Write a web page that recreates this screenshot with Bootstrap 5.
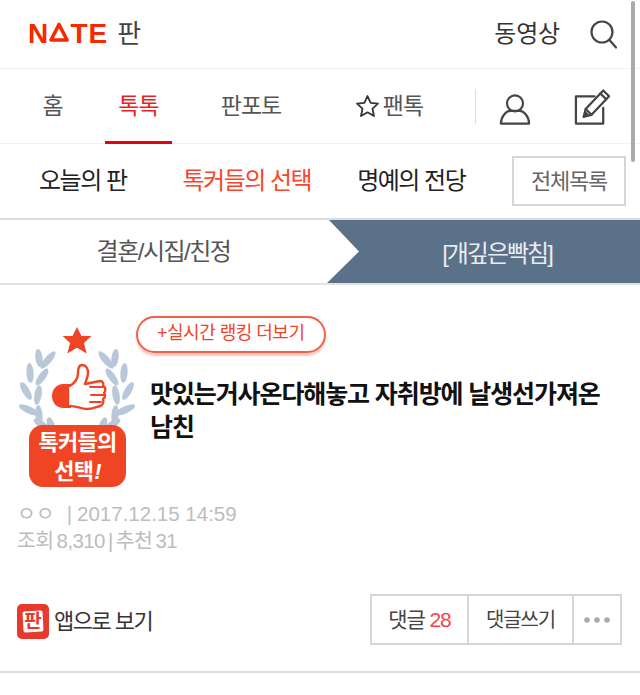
<!DOCTYPE html>
<html lang="ko">
<head>
  <meta charset="UTF-8">
  <meta name="viewport" content="width=device-width, initial-scale=1">
  <title>네이트 판</title>
  <link href="https://cdn.jsdelivr.net/npm/bootstrap@5.3.0/dist/css/bootstrap.min.css" rel="stylesheet">
  <style>
    body { font-family: "Liberation Sans", "Noto Sans CJK KR", sans-serif; color: #333; height: 695px; overflow: hidden; position: relative; background: #fff; }
    a { text-decoration: none; color: inherit; }
    .top-bar { height: 69px; border-bottom: 1px solid #f2f2f2; padding: 0 23px 0 28px; }
    .nate-logo { font-size: 28px; font-weight: 700; color: #f52a00; letter-spacing: 1px; line-height: 1; }
    .logo-a { position: relative; color: transparent; }
    .logo-a svg { position: absolute; left: 0; top: 4px; }
    .pann-word { font-size: 26px; margin-left: 9px; color: #444; line-height: 1; }
    .video-link { font-size: 24px; letter-spacing: -.2px; margin-right: 30px; }
    .main-tabs { height: 75px; border-bottom: 1px solid #f2f2f2; position: relative; }
    .main-tab { font-size: 23px; letter-spacing: -1px; color: #555; height: 74px; display: flex; align-items: center; justify-content: center; }
    .tab-home { width: 105px; }
    .tab-talk { width: 67px; color: #ee1c25; border-bottom: 3px solid #e60012; height: 75px; padding-top: 3px; }
    .tab-photo { width: 158px; }
    .tab-fan { width: 118px; gap: 3px; }
    .tab-split { width: 1px; height: 35px; background: #ddd; margin: 0 23px 0 27px; }
    .tab-user { margin-top: 6px; }
    .tab-pen { margin-left: 42px; margin-top: 2px; }
    .sub-tabs { height: 76px; border-bottom: 2px solid #ddd; font-size: 24px; letter-spacing: -1.5px; color: #222; padding-left: 39px; }
    .sub-pick { color: #f8452b; margin-left: 56px; margin-right: 46px; }
    .all-list { width: 114px; height: 50px; border: 2px solid #d6d6d6; margin-left: auto; margin-right: 14px; font-size: 22px; letter-spacing: -1.2px; color: #666; }
    .crumb-bar { height: 65px; border-bottom: 2px solid #e2e2e2; font-size: 24px; letter-spacing: -1.5px; }
    .crumb-left { width: 327px; color: #555; }
    .crumb-right { flex: 1; background: #5b7089; color: #e8ecf0; letter-spacing: -2px; clip-path: polygon(2px 0, 100% 0, 100% 100%, 0 100%, 32px 50%); }
    .crumb-right span { margin-left: 27px; padding-top: 4px; }
    .post-head { padding: 31px 0 0 18px; }
    .pick-badge { width: 118px; flex: none; position: relative; height: 163px; margin-top: 9px; }
    .pick-label { position: absolute; left: 11px; bottom: 1px; width: 97px; height: 62px; border-radius: 14px; background: #f04525; color: #fff; font-size: 22px; font-weight: 700; line-height: 29px; letter-spacing: -.8px; text-align: center; padding-top: 3px; }
    .pick-label i { margin-left: 1px; }
    .rank-pill { display: inline-block; height: 37px; line-height: 31px; padding: 0 19px; border: 2px solid #f0604a; border-radius: 19px; box-shadow: 0 3px 2px #f7c9c1; color: #f04525; font-size: 18px; letter-spacing: -.5px; }
    .post-title { margin: 25px 30px 0 14px; font-size: 25px; font-weight: 700; line-height: 33px; letter-spacing: -1.1px; color: #111; word-break: keep-all; }
    .post-meta { padding-left: 17px; margin-top: 12px; color: #bdbdbd; font-size: 20.5px; line-height: 27px; }
    .post-meta .sep { margin: 0 5px 0 12px; }
    .meta-stats { letter-spacing: -.6px; word-spacing: -2px; }
    .post-actions { padding: 0 18px 0 17px; margin-top: 40px; height: 77px; }
    .app-link { font-size: 22px; letter-spacing: -1.5px; gap: 5px; color: #333; margin-top: 10px; }
    .app-mark { font-size: 19px; font-weight: 700; letter-spacing: 0; }
    .act-group .btn { border: 2px solid #d6d6d6; border-radius: 0; background: #fff; color: #444; font-size: 20px; letter-spacing: -1.1px; height: 51px; padding: 0; }
    .act-group.btn-group > a.btn + .btn { margin-left: -2px; }
    .act-group .act-reply { width: 99px; font-size: 21px; }
    .act-write { width: 107px; }
    .act-more { width: 50px; }
    .act-reply em { font-style: normal; color: #f5454a; }
    .page-end { border-top: 2px solid #ddd; }
    .scroll-thumb { position: absolute; top: 1px; left: 631px; width: 4px; height: 161px; border-radius: 2px; background: #aaa; }
  </style>
</head>
<body>
  <header class="top-bar d-flex align-items-center">
    <a href="#" class="nate-logo">N<span class="logo-a">A<svg width="20" height="20" viewBox="0 0 20 20" fill="none" stroke="#f52a00" stroke-width="3.600" stroke-linejoin="round"><path d="M10 2.500L18 18H2z"/></svg></span>TE</a>
    <span class="pann-word">판</span>
    <a href="#" class="video-link ms-auto">동영상</a>
    <svg width="27" height="29" viewBox="0 0 27 29" fill="none" stroke="#444" stroke-width="2.200" stroke-linecap="round"><circle cx="12" cy="12" r="10.500"/><path d="M19.500 20l6.500 7.500"/></svg>
  </header>

  <nav class="main-tabs d-flex align-items-start">
    <a href="#" class="main-tab tab-home">홈</a>
    <a href="#" class="main-tab tab-talk">톡톡</a>
    <a href="#" class="main-tab tab-photo">판포토</a>
    <a href="#" class="main-tab tab-fan">
      <svg width="25" height="25" viewBox="0 0 25 25" fill="none" stroke="#333" stroke-width="1.800" stroke-linejoin="round"><path d="M12.500 2l3.100 6.900 7.400.8-5.500 5 1.500 7.300-6.500-3.700L6 22l1.500-7.300-5.500-5 7.400-.8z"/></svg>
      팬톡
    </a>
    <span class="tab-split align-self-center"></span>
    <svg class="align-self-center tab-user" width="32" height="33" viewBox="0 0 34 34" fill="none" stroke="#444" stroke-width="2.300" stroke-linejoin="round"><circle cx="17" cy="10.500" r="8.500"/><path d="M2 32c0-8 6-13.500 10-13.500h10c4 0 10 5.500 10 13.500z"/></svg>
    <svg class="align-self-center tab-pen" width="39" height="40" viewBox="0 0 40 40" fill="none" stroke="#444" stroke-width="2.300" stroke-linejoin="round" stroke-linecap="round"><path d="M22 9H3v28h28V21"/><path d="M11 30l2-8L31 3l6 6-18 19z"/><path d="M13 22l6 6M28 6l6 6"/><path d="M11 30l2-4 2 2z" fill="#444"/></svg>
  </nav>

  <div class="sub-tabs d-flex align-items-center">
    <a href="#">오늘의 판</a>
    <a href="#" class="sub-pick">톡커들의 선택</a>
    <a href="#">명예의 전당</a>
    <a href="#" class="all-list d-flex align-items-center justify-content-center">전체목록</a>
  </div>

  <div class="crumb-bar d-flex">
    <div class="crumb-left d-flex align-items-center justify-content-center">결혼/시집/친정</div>
    <div class="crumb-right d-flex align-items-center justify-content-center"><span>[개깊은빡침]</span></div>
  </div>

  <section class="post-head d-flex">
    <div class="pick-badge">
      <svg width="118" height="163" viewBox="0 0 118 163">
        <path d="M59 2l4.500 9h9.900l-7.500 7 2.800 10.500-9.700-5.800-9.700 5.800 2.800-10.500-7.500-7h9.900z" fill="#f04525"/>
        <g fill="#b9c8d8">
          <ellipse cx="30" cy="35" rx="3.600" ry="11" transform="rotate(40 30 35)"/>
          <ellipse cx="21" cy="33" rx="3.600" ry="9" transform="rotate(-8 21 33)"/>
          <ellipse cx="12" cy="48" rx="3.600" ry="10" transform="rotate(-4 12 48)"/>
          <ellipse cx="24" cy="52" rx="3.600" ry="10" transform="rotate(35 24 52)"/>
          <ellipse cx="8" cy="66" rx="3.600" ry="10" transform="rotate(-30 8 66)"/>
          <ellipse cx="20" cy="70" rx="3.600" ry="10" transform="rotate(10 20 70)"/>
          <ellipse cx="11" cy="85" rx="3.600" ry="11" transform="rotate(-65 11 85)"/>
          <ellipse cx="21" cy="90" rx="3.600" ry="10" transform="rotate(-5 21 90)"/>
          <ellipse cx="24" cy="100" rx="3.600" ry="10" transform="rotate(-55 24 100)"/>
          <ellipse cx="33" cy="100" rx="3.600" ry="8" transform="rotate(-20 33 100)"/>
          <ellipse cx="88" cy="35" rx="3.600" ry="11" transform="rotate(-40 88 35)"/>
          <ellipse cx="97" cy="33" rx="3.600" ry="9" transform="rotate(8 97 33)"/>
          <ellipse cx="106" cy="48" rx="3.600" ry="10" transform="rotate(4 106 48)"/>
          <ellipse cx="94" cy="52" rx="3.600" ry="10" transform="rotate(-35 94 52)"/>
          <ellipse cx="110" cy="66" rx="3.600" ry="10" transform="rotate(30 110 66)"/>
          <ellipse cx="98" cy="70" rx="3.600" ry="10" transform="rotate(-10 98 70)"/>
          <ellipse cx="107" cy="85" rx="3.600" ry="11" transform="rotate(65 107 85)"/>
          <ellipse cx="97" cy="90" rx="3.600" ry="10" transform="rotate(5 97 90)"/>
          <ellipse cx="94" cy="100" rx="3.600" ry="10" transform="rotate(55 94 100)"/>
          <ellipse cx="85" cy="100" rx="3.600" ry="8" transform="rotate(20 85 100)"/>
        </g>
        <path d="M45 59h8v24h-8c-6 0-11-5-11-12s5-12 11-12z" fill="#f04525"/>
        <path d="M50 62c6-3 10-8 10-14 0-5 1-8 4-8 4 0 6 4 6 8 0 4-2 8-3 11l15-3c3 0 4 3 3 5 3 1 3 5 1 7 2 2 1 5-1 6 1 3 0 6-3 7-4 1-8 3-13 3-6 0-13-4-19-3z" fill="#fff" stroke="#f04525" stroke-width="2.400" stroke-linejoin="round"/>
        <path d="M72 62h13M73 70h13M72 77h11" fill="none" stroke="#f04525" stroke-width="2" stroke-linecap="round"/>
      </svg>
      <div class="pick-label">톡커들의<br>선택<i>!</i></div>
    </div>
    <div>
      <a href="#" class="rank-pill">+실시간 랭킹 더보기</a>
      <h1 class="post-title">맛있는거사온다해놓고 자취방에 날생선가져온 남친</h1>
    </div>
  </section>

  <div class="post-meta">
    <div>ㅇㅇ<span class="sep">|</span>2017.12.15 14:59</div>
    <div class="meta-stats">조회 8,310 | 추천 31</div>
  </div>

  <div class="post-actions d-flex align-items-start justify-content-between">
    <a href="#" class="app-link d-flex align-items-center">
      <svg width="32" height="35" viewBox="0 0 32 35"><rect width="32" height="35" rx="5" fill="#e8392e"/><rect x="6" y="7" width="20" height="21" rx="2" fill="#fff" transform="rotate(-3 16 17)"/><text class="app-mark" x="16" y="24" text-anchor="middle" fill="#e8392e">판</text></svg>
      앱으로 보기
    </a>
    <div class="act-group btn-group">
      <a href="#" class="btn act-reply d-flex align-items-center justify-content-center"><span>댓글 <em>28</em></span></a>
      <a href="#" class="btn act-write d-flex align-items-center justify-content-center">댓글쓰기</a>
      <a href="#" class="btn act-more d-flex align-items-center justify-content-center">
        <svg width="26" height="6" viewBox="0 0 26 6" fill="#aaa"><circle cx="3" cy="3" r="2.800"/><circle cx="13" cy="3" r="2.800"/><circle cx="23" cy="3" r="2.800"/></svg>
      </a>
    </div>
  </div>
  <div class="page-end"></div>

  <div class="scroll-thumb"></div>

  <script src="https://cdn.jsdelivr.net/npm/bootstrap@5.3.0/dist/js/bootstrap.bundle.min.js"></script>
</body>
</html>
